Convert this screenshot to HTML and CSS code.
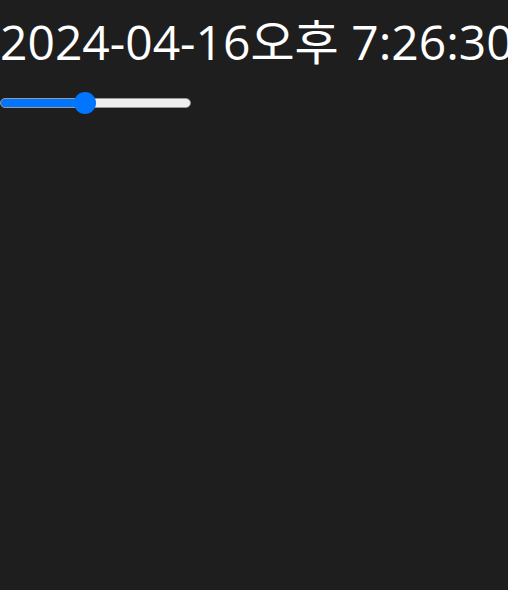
FILE: index.html
```html
<!DOCTYPE html>
<html lang="ko">
<head>
<meta charset="utf-8">
<link rel="stylesheet" href="styles.css">
</head>
<body>
<div class="clock">2024-04-16오후 7:26:30</div>
<input class="slider" type="range" min="0" max="100" value="44" style="--fill: 85px">
</body>
</html>
```
FILE: styles.css
```css
html, body {
  margin: 0;
  padding: 0;
  background: #1e1e1e;
  overflow: hidden;
}
.clock {
  color: #ffffff;
  font-family: "Open Sans", "Noto Sans CJK KR", sans-serif;
  font-size: 48px;
  line-height: 84px;
  white-space: nowrap;
}
.slider {
  -webkit-appearance: none;
  appearance: none;
  display: block;
  margin: 8px 0 0 0;
  padding: 0;
  width: 191px;
  height: 22px;
  background: transparent;
}
.slider::-webkit-slider-runnable-track {
  height: 10px;
  border-radius: 5px;
  box-sizing: border-box;
  border: 1px solid #9a9a9a;
  background: linear-gradient(to right, #0075ff 0, #0075ff var(--fill), #efefef var(--fill), #efefef 100%);
}
.slider::-webkit-slider-thumb {
  -webkit-appearance: none;
  appearance: none;
  width: 22px;
  height: 22px;
  margin-top: -7px;
  border: none;
  border-radius: 50%;
  background: #0075ff;
}
```
